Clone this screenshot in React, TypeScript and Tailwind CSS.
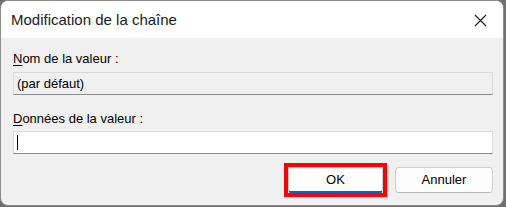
export default function App() {
  return (
    <div className="h-[207px] w-[506px] bg-[#6f6f6f] font-['Liberation_Sans',Arial,sans-serif]">
      <div className="flex h-[206px] w-[504px] flex-col overflow-hidden rounded-[8px] border border-[#8c8c8c] bg-[#f0f0f0]">
        <header className="flex h-[37px] items-center justify-between bg-white pl-[10px] pr-[16px]">
          <span className="pt-[1px] text-[15px] text-[#1a1a1a]">Modification de la chaîne</span>
          <svg width="13" height="13" viewBox="0 0 13 13" className="mt-[1px]" aria-hidden>
            <path d="M1 1L12 12M12 1L1 12" stroke="#1a1a1a" strokeWidth="1.1" />
          </svg>
        </header>

        <div className="flex flex-col pl-[12px] pr-[10px] pt-[12px] text-[13px] text-black">
          <label className="leading-[17px]">
            <span className="underline underline-offset-2">N</span>om de la valeur :
          </label>
          <div className="mt-[5px] flex h-[23px] items-center border border-[#dadada] border-b-[#8d8d8d] bg-[#f0f0f0] pl-[3px]">
            (par défaut)
          </div>

          <label className="mt-[15px] leading-[17px]">
            <span className="underline underline-offset-2">D</span>onnées de la valeur :
          </label>
          <div className="mt-[4px] flex h-[23px] items-center border border-[#dcdcdc] border-b-[#8d8d8d] bg-white pl-[3px]">
            <span className="h-[15px] w-[1px] bg-black" />
          </div>

          <div className="mt-[9px] flex items-center justify-end gap-[8px]">
            <div className="border-4 border-[#ff0000]">
              <button className="flex h-[26px] w-[95px] items-center justify-center rounded-[3px] border border-[#d0d0d0] border-b-2 border-b-[#0067c0] bg-[#fdfdfd] text-[13px]">
                OK
              </button>
            </div>
            <button className="flex h-[26px] w-[98px] items-center justify-center rounded-[4px] border border-[#d0d0d0] border-b-[#b8b8b8] bg-[#fdfdfd] text-[13px]">
              Annuler
            </button>
          </div>
        </div>
      </div>
    </div>
  );
}
